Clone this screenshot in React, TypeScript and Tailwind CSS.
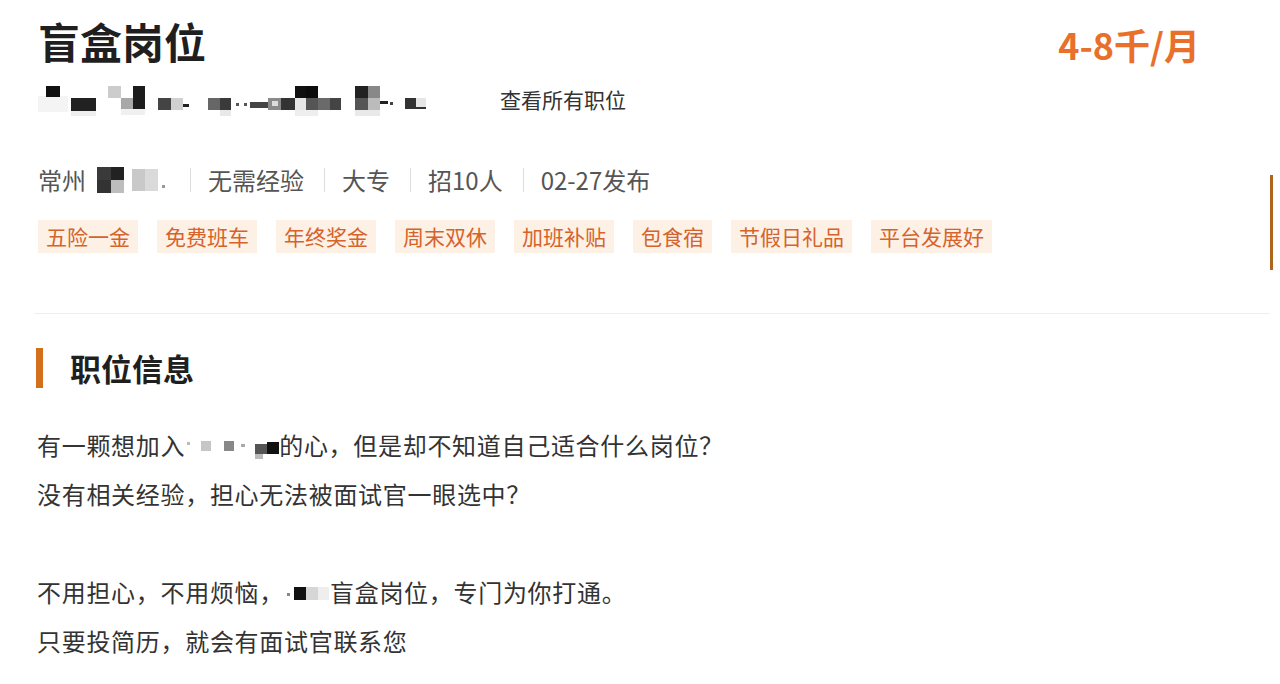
const tags = [
  "五险一金",
  "免费班车",
  "年终奖金",
  "周末双休",
  "加班补贴",
  "包食宿",
  "节假日礼品",
  "平台发展好",
];

const meta = ["无需经验", "大专", "招10人", "02-27发布"];

// pixelated blocks standing in for the blurred company name
const companyBlocks: [number, number, number, number, string][] = [
  [0, 12, 30, 16, "#f4f4f4"],
  [8, 2, 14, 11, "#111"],
  [33, 14, 25, 13, "#222"],
  [33, 27, 25, 5, "#eeeeee"],
  [70, 2, 13, 12, "#cccccc"],
  [83, 14, 12, 11, "#a8a8a8"],
  [95, 2, 12, 23, "#1c1c1c"],
  [83, 25, 24, 6, "#f0f0f0"],
  [120, 14, 13, 12, "#444"],
  [133, 14, 12, 12, "#d0d0d0"],
  [145, 20, 6, 3, "#222"],
  [170, 14, 12, 12, "#666"],
  [182, 14, 11, 12, "#3a3a3a"],
  [182, 26, 11, 6, "#e8e8e8"],
  [198, 19, 3, 3, "#555"],
  [206, 19, 3, 3, "#555"],
  [212, 18, 18, 6, "#444"],
  [230, 14, 13, 12, "#8a8a8a"],
  [234, 17, 6, 5, "#ddd"],
  [243, 14, 14, 12, "#333"],
  [257, 2, 11, 12, "#111"],
  [257, 14, 11, 12, "#e6e6e6"],
  [268, 2, 12, 12, "#0c0c0c"],
  [268, 14, 12, 12, "#555"],
  [257, 26, 23, 6, "#eeeeee"],
  [280, 14, 12, 12, "#6a6a6a"],
  [292, 14, 11, 12, "#444"],
  [317, 2, 13, 12, "#222"],
  [317, 14, 13, 12, "#555"],
  [317, 26, 25, 6, "#e9e9e9"],
  [330, 2, 12, 12, "#888"],
  [330, 14, 12, 12, "#bbbbbb"],
  [342, 17, 8, 3, "#222"],
  [352, 18, 3, 3, "#444"],
  [367, 14, 11, 11, "#333"],
  [378, 14, 10, 11, "#e6e6e6"],
  [370, 23, 18, 2, "#333"],
];

function Mosaic({
  w,
  h,
  blocks,
}: {
  w: number;
  h: number;
  blocks: [number, number, number, number, string][];
}) {
  return (
    <svg width={w} height={h} viewBox={`0 0 ${w} ${h}`} className="shrink-0">
      {blocks.map(([x, y, bw, bh, c], i) => (
        <rect key={i} x={x} y={y} width={bw} height={bh} fill={c} />
      ))}
    </svg>
  );
}

export default function App() {
  return (
    <div className="w-[1280px] h-[684px] overflow-hidden bg-white font-['Noto_Sans_CJK_SC','Liberation_Sans',sans-serif] text-[#333]">
      {/* Header */}
      <div className="flex">
        <div className="flex-1 pl-[38px] pt-[16px]">
          <h1 className="text-[42px] leading-[50px] font-bold text-[#1f1f1f]">
            盲盒岗位
          </h1>

          <div className="mt-[18px] flex items-center h-[32px]">
            <Mosaic w={410} h={32} blocks={companyBlocks} />
            <span className="ml-[52px] text-[21px] text-[#333]">
              查看所有职位
            </span>
          </div>

          <div className="mt-[49px] flex items-center h-[30px] text-[24px] leading-[30px] text-[#555]">
            <span>常州</span>
            <div className="ml-[11px]">
              <Mosaic
                w={68}
                h={26}
                blocks={[
                  [0, 0, 14, 13, "#3a3a3a"],
                  [14, 0, 13, 13, "#222"],
                  [0, 13, 14, 13, "#333"],
                  [14, 13, 13, 13, "#bdbdbd"],
                  [35, 2, 13, 22, "#c9c9c9"],
                  [48, 2, 13, 22, "#dadada"],
                  [65, 18, 3, 3, "#999"],
                ]}
              />
            </div>
            {meta.map((m, i) => (
              <div key={m} className="flex items-center">
                <span
                  className={`${i === 0 ? "ml-[25px]" : "ml-[20px]"} mr-[17px] w-px h-[24px] bg-[#dddddd]`}
                />
                <span>{m}</span>
              </div>
            ))}
          </div>

          <div className="mt-[25px] flex gap-[19px]">
            {tags.map((t) => (
              <span
                key={t}
                className="px-[8px] h-[33px] leading-[33px] text-[21px] bg-[#fdf0e4] text-[#d5632c]"
              >
                {t}
              </span>
            ))}
          </div>
        </div>

        <div className="flex flex-col items-end">
          <span className="mt-[20px] mr-[80px] text-[36px] leading-[48px] font-bold text-[#e8702a]">
            4-8千/月
          </span>
          <span className="mt-[107px] mr-[7px] w-[3px] h-[95px] bg-[#b0651f]" />
        </div>
      </div>

      {/* Divider */}
      <div className="mt-[43px] ml-[34px] w-[1236px] h-px bg-[#eeeeee]" />

      {/* Section */}
      <div className="mt-[34px] ml-[36px] flex items-center h-[40px]">
        <span className="w-[7px] h-[40px] bg-[#d2701e]" />
        <h2 className="ml-[27px] text-[31px] leading-[40px] font-bold text-[#1f1f1f]">
          职位信息
        </h2>
      </div>

      <div className="mt-[32px] pl-[37px] text-[24px] leading-[49px] tracking-[0.7px] text-[#333]">
        <p className="flex items-center">
          <span>有一颗想加入</span>
          <Mosaic
            w={94}
            h={30}
            blocks={[
              [2, 12, 3, 3, "#bbb"],
              [16, 11, 10, 10, "#c6c6c6"],
              [39, 11, 10, 10, "#888"],
              [56, 14, 4, 3, "#aaa"],
              [70, 14, 12, 10, "#555"],
              [70, 24, 8, 5, "#bbb"],
              [82, 12, 12, 12, "#111"],
            ]}
          />
          <span>的心，但是却不知道自己适合什么岗位？</span>
        </p>
        <p>没有相关经验，担心无法被面试官一眼选中？</p>
        <p className="h-[49px]" />
        <p className="flex items-center">
          <span>不用担心，不用烦恼，</span>
          <Mosaic
            w={46}
            h={30}
            blocks={[
              [3, 16, 3, 3, "#888"],
              [10, 10, 12, 13, "#111"],
              [22, 10, 12, 13, "#d6d6d6"],
              [34, 10, 11, 13, "#eeeeee"],
            ]}
          />
          <span>盲盒岗位，专门为你打通。</span>
        </p>
        <p>只要投简历，就会有面试官联系您</p>
      </div>
    </div>
  );
}
